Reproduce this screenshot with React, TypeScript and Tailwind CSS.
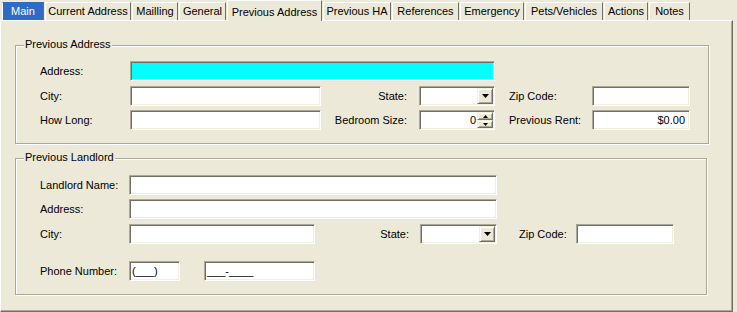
import React from "react";

const tabs = [
  { label: "Main", w: "w-[42px]" },
  { label: "Current Address", w: "w-[86px]" },
  { label: "Mailling", w: "w-[46px]" },
  { label: "General", w: "w-[47px]" },
  { label: "Previous Address", w: "w-[95px]" },
  { label: "Previous HA", w: "w-[68px]" },
  { label: "References", w: "w-[67px]" },
  { label: "Emergency", w: "w-[64px]" },
  { label: "Pets/Vehicles", w: "w-[78px]" },
  { label: "Actions", w: "w-[44px]" },
  { label: "Notes", w: "w-[41px]" },
];

const sunken =
  "h-[20px] border border-t-[#ACA899] border-l-[#ACA899] border-r-white border-b-white shadow-[inset_1px_1px_0_#716F64,inset_-1px_-1px_0_#F1EFE2]";

const raised =
  "bg-[#ECE9D8] border border-t-[#F1EFE2] border-l-[#F1EFE2] border-r-[#716F64] border-b-[#716F64] shadow-[inset_1px_1px_0_#FFFFFF,inset_-1px_-1px_0_#ACA899]";

function Input({ w, value, right, cyan }: { w: string; value?: string; right?: boolean; cyan?: boolean }) {
  return (
    <div
      className={`${sunken} ${w} ${cyan ? "bg-[#00FFFF]" : "bg-white"} flex items-center ${
        right ? "justify-end pr-[4px]" : "pl-[2px]"
      }`}
    >
      {value}
    </div>
  );
}

function Combo({ w }: { w: string }) {
  return (
    <div className={`${sunken} bg-white ${w} flex justify-end p-[1px]`}>
      <div className={`${raised} w-[16px] h-[16px] flex items-center justify-center`}>
        <svg width="7" height="4" viewBox="0 0 7 4">
          <polygon points="0,0 7,0 3.5,4" fill="#000" />
        </svg>
      </div>
    </div>
  );
}

function Spin({ w, value }: { w: string; value: string }) {
  return (
    <div className={`${sunken} bg-white ${w} flex items-center p-[1px]`}>
      <div className="flex-1 text-right pr-[1px]">{value}</div>
      <div className="flex flex-col w-[16px] h-[16px]">
        <div className={`${raised} h-[8px] flex items-center justify-center`}>
          <svg width="5" height="3" viewBox="0 0 5 3">
            <polygon points="2.5,0 5,3 0,3" fill="#000" />
          </svg>
        </div>
        <div className={`${raised} h-[8px] flex items-center justify-center`}>
          <svg width="5" height="3" viewBox="0 0 5 3">
            <polygon points="0,0 5,0 2.5,3" fill="#000" />
          </svg>
        </div>
      </div>
    </div>
  );
}

function GroupBox({ title, className, children }: { title: string; className: string; children: React.ReactNode }) {
  return (
    <div
      className={`relative border border-[#ACA899] shadow-[1px_1px_0_#FFFFFF,inset_1px_1px_0_#FFFFFF] ${className}`}
    >
      <div className="absolute left-[8px] top-[-8px] px-[1px] bg-[#ECE9D8] leading-[13px]">{title}</div>
      {children}
    </div>
  );
}

export default function App() {
  return (
    <div className="w-[737px] h-[312px] bg-[#ECE9D8] text-[11px] text-black font-['Liberation_Sans',Arial,sans-serif] overflow-hidden">
      {/* TABS */}
      <div className="flex items-end h-[20px] pl-[2px] gap-[1px]">
        {tabs.map((t) => {
          const selected = t.label === "Previous Address";
          const main = t.label === "Main";
          return (
            <div
              key={t.label}
              className={`${t.w} flex justify-center border-l border-t border-white border-r border-r-[#716F64] whitespace-nowrap ${
                selected
                  ? "h-[21px] -mb-[1px] relative z-10 bg-[#ECE9D8] items-start pt-[3px]"
                  : main
                  ? "h-[18px] bg-[#316AC5] text-white items-center border-t-[#316AC5]"
                  : "h-[18px] bg-[#ECE9D8] items-center"
              }`}
            >
              {t.label}
            </div>
          );
        })}
      </div>

      {/* PANEL */}
      <div className="w-[733px] h-[292px] border border-t-white border-l-white border-r-[#716F64] border-b-[#716F64] shadow-[inset_-1px_-1px_0_#ACA899] pl-[14px] pt-[24px]">
        <GroupBox title="Previous Address" className="w-[694px] h-[99px] pt-[15px] pl-[24px]">
          <div className="flex items-center">
            <div className="w-[90px]">Address:</div>
            <Input w="w-[365px]" cyan />
          </div>
          <div className="flex items-center mt-[5px]">
            <div className="w-[90px]">City:</div>
            <Input w="w-[191px]" />
            <div className="w-[86px] text-right">State:</div>
            <div className="ml-[12px]">
              <Combo w="w-[76px]" />
            </div>
            <div className="w-[83px] ml-[14px]">Zip Code:</div>
            <Input w="w-[98px]" />
          </div>
          <div className="flex items-center mt-[4px]">
            <div className="w-[90px]">How Long:</div>
            <Input w="w-[191px]" />
            <div className="w-[86px] text-right">Bedroom Size:</div>
            <div className="ml-[12px]">
              <Spin w="w-[76px]" value="0" />
            </div>
            <div className="w-[83px] ml-[14px]">Previous Rent:</div>
            <Input w="w-[98px]" value="$0.00" right />
          </div>
        </GroupBox>

        <GroupBox title="Previous Landlord" className="mt-[14px] w-[692px] h-[137px] pt-[16px] pl-[24px]">
          <div className="flex items-center">
            <div className="w-[89px]">Landlord Name:</div>
            <Input w="w-[368px]" />
          </div>
          <div className="flex items-center mt-[4px]">
            <div className="w-[89px]">Address:</div>
            <Input w="w-[368px]" />
          </div>
          <div className="flex items-center mt-[5px]">
            <div className="w-[89px]">City:</div>
            <Input w="w-[186px]" />
            <div className="w-[94px] text-right">State:</div>
            <div className="ml-[11px]">
              <Combo w="w-[77px]" />
            </div>
            <div className="w-[57px] ml-[22px]">Zip Code:</div>
            <Input w="w-[98px]" />
          </div>
          <div className="flex items-center mt-[17px]">
            <div className="w-[89px]">Phone Number:</div>
            <Input w="w-[51px]" value="(___)" />
            <div className="ml-[24px]">
              <Input w="w-[111px]" value="___-____" />
            </div>
          </div>
        </GroupBox>
      </div>
    </div>
  );
}
